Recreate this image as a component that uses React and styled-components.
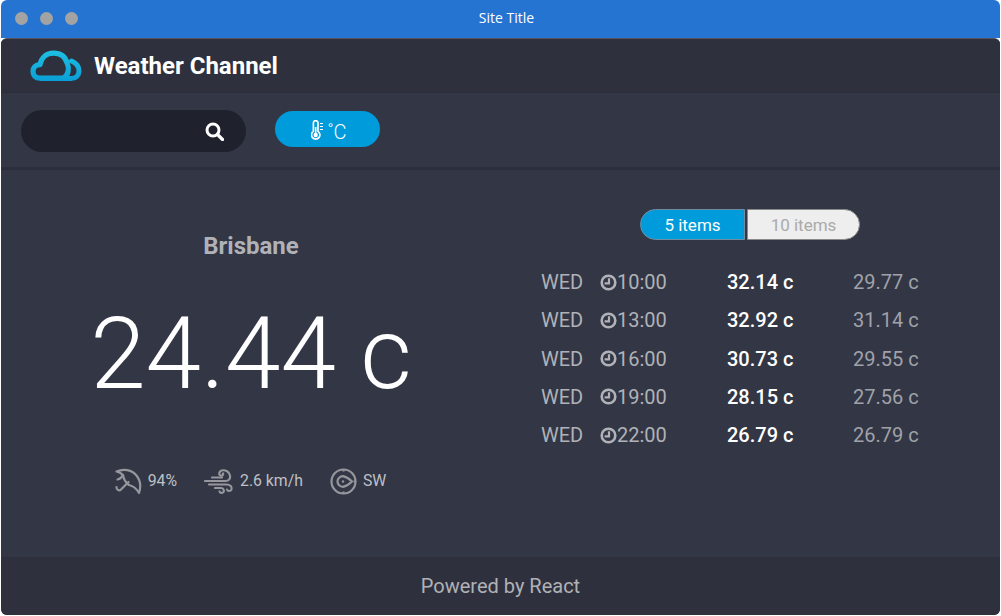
import React from "react";
import styled, { createGlobalStyle } from "styled-components";

const Global = createGlobalStyle`
  html, body { margin: 0; padding: 0; background: #fff; }
  body { font-family: Roboto, "Liberation Sans", sans-serif; }
  * { box-sizing: border-box; }
`;

const Page = styled.div`
  width: 1001px; height: 616px; padding: 0 1px 1px 1px;
  display: flex; flex-direction: column;
`;
const TitleBar = styled.div`
  height: 38px; flex: none; background: #2574d2; border-radius: 6px 6px 0 0;
  display: flex; align-items: center; padding: 0 16px 2px 14px; position: relative;
`;
const Dots = styled.div`display: flex; gap: 12px;`;
const Dot = styled.span`width: 13px; height: 13px; border-radius: 50%; background: #a3a3a3;`;
const TitleText = styled.div`
  position: absolute; left: 12px; right: 0; top: 9px; text-align: center;
  color: #fff; font: 400 14px/18px "Open Sans", sans-serif;
`;
const AppBody = styled.div`
  flex: 1; min-height: 0; display: flex; flex-direction: column; background: #333645;
  border-radius: 6px; border-top: 1px solid #55545a; overflow: hidden;
`;
const Header = styled.header`
  height: 54px; flex: none; background: #2e313d; border-bottom: 1px solid #2b2e39;
  display: flex; align-items: center; gap: 12px; padding: 0 0 0 29px;
`;
const Brand = styled.h1`margin: 0; color: #fff; font: 700 24px/28px Roboto, sans-serif;`;
const Toolbar = styled.div`
  height: 77px; flex: none; display: flex; align-items: flex-start; padding: 17px 0 0 20px; gap: 29px;
  border-bottom: 3px solid #2c2f3b;
`;
const Search = styled.div`
  width: 225px; height: 42px; border-radius: 21px; background: #1f212c;
  display: flex; align-items: center; justify-content: flex-end; padding: 0 22px 0 0;
`;
const UnitButton = styled.div`
  width: 105px; height: 36px; margin-top: 1px; border-radius: 18px; background: #009bdb; color: #fff;
  display: flex; align-items: center; justify-content: center; gap: 3px; padding: 2px 0 0 3px;
  font: 300 20px/24px Roboto, sans-serif;
`;
const UnitLabel = styled.span`padding-top: 3px;`;
const Main = styled.main`flex: 1; min-height: 0; display: grid; grid-template-columns: 500px 1fr;`;
const Current = styled.section`display: flex; flex-direction: column; align-items: center; padding-top: 62px;`;
const City = styled.h2`margin: 0; color: #b0b2b7; font: 700 24px/28px Roboto, sans-serif;`;
const Temp = styled.div`margin-top: 36px; color: #fff; font: 300 100px/116px Roboto, sans-serif;`;
const Stats = styled.div`display: flex; align-items: center; margin-top: 54px; gap: 27px; padding-right: 1px;`;
const Stat = styled.div`display: flex; align-items: center; gap: 6px; color: #bec0c5; font: 400 15.8px/30px Roboto, sans-serif;`;
const Forecast = styled.section`display: flex; flex-direction: column; padding-top: 39px;`;
const Toggle = styled.div`display: flex; align-self: flex-start; margin-left: 139px;`;
const ToggleBtn = styled.div`
  width: ${p => p.$w}px; height: 31px; display: flex; align-items: center; justify-content: center;
  font: 400 17px/20px Roboto, sans-serif; border: 1px solid ${p => p.$active ? "#6f8ea3" : "#8a8a8a"};
  color: ${p => p.$active ? "#fff" : "#aaa"}; background: ${p => p.$active ? "#009bdb" : "#eee"};
  border-radius: ${p => p.$active ? "16px 0 0 16px" : "0 16px 16px 0"};
  margin-right: ${p => p.$active ? "2px" : "0"};
`;
const Rows = styled.div`margin-top: 23px; display: flex; flex-direction: column;`;
const Row = styled.div`
  height: 38.25px; display: grid; grid-template-columns: 59px 127px 126px 1fr; align-items: center;
  padding-left: 40px; font: 400 20px/24px Roboto, sans-serif; color: #b0b2b7;
`;
const Time = styled.span`display: flex; align-items: center; color: #b0b2b7;`;
const High = styled.span`color: #fff; font-weight: 500;`;
const Low = styled.span`color: #a0a2a9;`;
const Footer = styled.footer`
  height: 58px; flex: none; background: #2e313d; color: #b0b2b7;
  display: flex; align-items: center; justify-content: center; font: 400 20px/24px Roboto, sans-serif;
`;

const CloudLogo = () => (
  <svg width="52" height="32" viewBox="0 0 52 32" fill="none">
    <defs>
      <linearGradient id="cg" gradientUnits="userSpaceOnUse" x1="0" y1="1" x2="0" y2="31">
        <stop offset="0" stopColor="#1ec0e2" /><stop offset="1" stopColor="#0a9fd6" />
      </linearGradient>
    </defs>
    <path d="M10 28.2C5.5 28.2 3 25.5 3 21.5C3 17.5 5.5 14.8 10 14.7C11.5 7.5 16.5 3.2 23.5 3.2C30.5 3.2 35.5 7 37.3 13.5C39.3 18 39 25 33 28.2Z" stroke="url(#cg)" strokeWidth="5.2" strokeLinejoin="round" />
    <path d="M41.5 11C46 13 49 16.5 49 21C49 25.5 46 28.6 41 28.6" stroke="url(#cg)" strokeWidth="5" strokeLinecap="round" />
    <path d="M10 28.4H41" stroke="url(#cg)" strokeWidth="5" />
  </svg>
);
const SearchIcon = () => (
  <svg width="19" height="19" viewBox="0 0 19 19" fill="none" stroke="#fff">
    <circle cx="8" cy="8" r="6" strokeWidth="3" /><path d="M12.5 12.5L17.5 17.5" strokeWidth="3.2" strokeLinecap="round" />
  </svg>
);
const Thermo = () => (
  <svg width="13" height="20" viewBox="0 0 13 20" fill="none" stroke="#fff" strokeWidth="1.7">
    <path d="M2.4 11.4V3a2.3 2.3 0 0 1 4.6 0V11.4a4.2 4.2 0 1 1-4.6 0Z" />
    <circle cx="4.7" cy="15" r="2.2" fill="#fff" stroke="none" />
    <path d="M4.7 14V7" strokeWidth="1.6" /><path d="M9 3.5h3M9 6.5h3M9 9.5h3" strokeWidth="1.1" />
  </svg>
);
const Umbrella = () => (
  <svg width="27" height="27" viewBox="0 0 27 27" fill="none" stroke="#95979d" strokeWidth="2.2" strokeLinecap="round" strokeLinejoin="round">
    <path d="M1.5 3.5C8 0.5 17 1.5 21.5 7.5C25.5 12.5 26 19 24 25C21.5 20.5 18 18 14 17C10.5 14.5 8.5 10 8 7C6.5 5.5 4 4 1.5 3.5Z" />
    <path d="M13.5 14L6 21.5C4 23.5 1.2 21.5 1.5 19" />
    <path d="M8 7C7 9 5 11 2.5 11.5" />
  </svg>
);
const Wind = () => (
  <svg width="30" height="27" viewBox="0 0 30 27" fill="none" stroke="#95979d" strokeWidth="2.2" strokeLinecap="round">
    <path d="M1 13H21.5C25 13 26.5 10.5 26 7.5C25.5 4 21.5 1.5 17.5 2.5C15 3.5 14.5 6.5 16.5 7.5C18 8.2 19.5 7 19 5.5" />
    <path d="M8 9.5H18" />
    <path d="M5 16.5H22.5C26 16.5 28.5 19 27.5 21.5C26.5 23.5 23.5 23.5 23 21.5" />
    <path d="M11 20H17C19.5 20 20.5 22.5 19.5 24C18.5 25.5 16 25 15.5 23.5" />
  </svg>
);
const Compass = () => (
  <svg width="27" height="27" viewBox="0 0 27 27" fill="none" stroke="#95979d" strokeWidth="2.2" strokeLinejoin="round">
    <circle cx="13.5" cy="13.5" r="12" />
    <path d="M13.5 1.5V3.5M25.5 13.5H23.5M13.5 25.5V23.5" />
    <path d="M13 8.2C16 8.8 19.5 11 22 13.5C19.5 16 16 18.2 13 18.8C10 18.8 7.5 16.5 7.5 13.5C7.5 10.5 10 8.2 13 8.2Z" />
    <circle cx="13" cy="13.5" r="1.2" fill="#95979d" stroke="none" />
  </svg>
);
const Clock = () => (
  <svg width="17" height="17" viewBox="0 0 17 17" fill="none" stroke="#b0b2b7" strokeWidth="2.6">
    <circle cx="8.5" cy="8.5" r="6.8" /><path d="M9 4.2V9.4H4.6" strokeWidth="2.2" />
  </svg>
);

const data = [
  ["10:00", "32.14 c", "29.77 c"],
  ["13:00", "32.92 c", "31.14 c"],
  ["16:00", "30.73 c", "29.55 c"],
  ["19:00", "28.15 c", "27.56 c"],
  ["22:00", "26.79 c", "26.79 c"],
];

export default function App() {
  return (
    <Page>
      <Global />
      <TitleBar>
        <Dots><Dot /><Dot /><Dot /></Dots>
        <TitleText>Site Title</TitleText>
      </TitleBar>
      <AppBody>
        <Header><CloudLogo /><Brand>Weather Channel</Brand></Header>
        <Toolbar>
          <Search><SearchIcon /></Search>
          <UnitButton><Thermo /><UnitLabel>˚C</UnitLabel></UnitButton>
        </Toolbar>
        <Main>
          <Current>
            <City>Brisbane</City>
            <Temp>24.44 c</Temp>
            <Stats>
              <Stat><Umbrella />94%</Stat>
              <Stat><Wind />2.6 km/h</Stat>
              <Stat><Compass />SW</Stat>
            </Stats>
          </Current>
          <Forecast>
            <Toggle>
              <ToggleBtn $active $w={105}>5 items</ToggleBtn>
              <ToggleBtn $w={113}>10 items</ToggleBtn>
            </Toggle>
            <Rows>
              {data.map(([t, h, l]) => (
                <Row key={t}>
                  <span>WED</span>
                  <Time><Clock />{t}</Time>
                  <High>{h}</High>
                  <Low>{l}</Low>
                </Row>
              ))}
            </Rows>
          </Forecast>
        </Main>
        <Footer>Powered by React</Footer>
      </AppBody>
    </Page>
  );
}
